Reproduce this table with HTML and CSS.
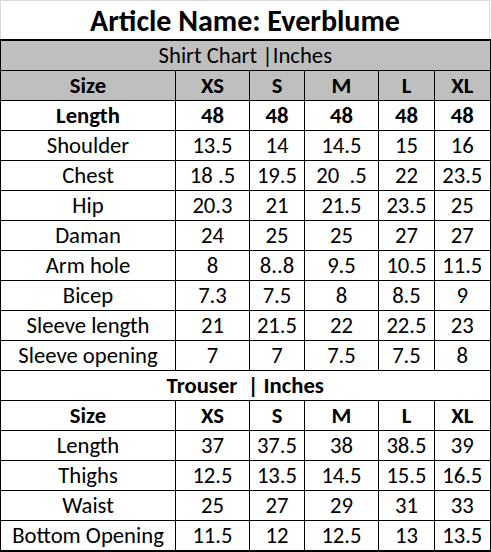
FILE: index.html
```html
<!DOCTYPE html>
<html>
<head>
<meta charset="utf-8">
<link rel="stylesheet" href="styles.css">
</head>
<body>
<div class="sheet">
  <div class="title">Article Name: Everblume</div>
  <table class="chart">
    <colgroup>
      <col class="c-label"><col class="c-xs"><col class="c-s"><col class="c-m"><col class="c-l"><col class="c-xl">
    </colgroup>
    <tbody>
      <tr class="section gray"><td colspan="6">Shirt Chart |Inches</td></tr>
      <tr class="head gray"><td>Size</td><td>XS</td><td>S</td><td>M</td><td>L</td><td>XL</td></tr>
      <tr class="bold"><td>Length</td><td>48</td><td>48</td><td>48</td><td>48</td><td>48</td></tr>
      <tr><td>Shoulder</td><td>13.5</td><td>14</td><td>14.5</td><td>15</td><td>16</td></tr>
      <tr><td>Chest</td><td>18 .5</td><td>19.5</td><td>20 &nbsp;.5</td><td>22</td><td>23.5</td></tr>
      <tr><td>Hip</td><td>20.3</td><td>21</td><td>21.5</td><td>23.5</td><td>25</td></tr>
      <tr><td>Daman</td><td>24</td><td>25</td><td>25</td><td>27</td><td>27</td></tr>
      <tr><td>Arm hole</td><td>8</td><td>8..8</td><td>9.5</td><td>10.5</td><td>11.5</td></tr>
      <tr><td>Bicep</td><td>7.3</td><td>7.5</td><td>8</td><td>8.5</td><td>9</td></tr>
      <tr><td>Sleeve length</td><td>21</td><td>21.5</td><td>22</td><td>22.5</td><td>23</td></tr>
      <tr><td>Sleeve opening</td><td>7</td><td>7</td><td>7.5</td><td>7.5</td><td>8</td></tr>
      <tr class="section"><td colspan="6"><b>Trouser &nbsp;| Inches</b></td></tr>
      <tr class="head"><td>Size</td><td>XS</td><td>S</td><td>M</td><td>L</td><td>XL</td></tr>
      <tr><td>Length</td><td>37</td><td>37.5</td><td>38</td><td>38.5</td><td>39</td></tr>
      <tr><td>Thighs</td><td>12.5</td><td>13.5</td><td>14.5</td><td>15.5</td><td>16.5</td></tr>
      <tr><td>Waist</td><td>25</td><td>27</td><td>29</td><td>31</td><td>33</td></tr>
      <tr><td>Bottom Opening</td><td>11.5</td><td>12</td><td>12.5</td><td>13</td><td>13.5</td></tr>
    </tbody>
  </table>
</div>
</body>
</html>
```
FILE: styles.css
```css
html, body {
  margin: 0;
  padding: 0;
  background: #ffffff;
}
.sheet {
  width: 491px;
  font-family: Carlito, Lato, "Liberation Sans", sans-serif;
  color: #000;
}
.title {
  box-sizing: border-box;
  width: 490px;
  height: 39px;
  border: 1px solid #d9d9d9;
  border-bottom: none;
  text-align: center;
  font-weight: bold;
  font-size: 30px;
  line-height: 40px;
}
.chart {
  width: 490px;
  border-collapse: collapse;
  table-layout: fixed;
  border-top: 2px solid #000;
  border-right: 2px solid #000;
  border-bottom: 2px solid #000;
  border-left: 1px solid #000;
  font-size: 22.7px;
}
.c-label { width: 175px; }
.c-xs { width: 74px; }
.c-s { width: 55px; }
.c-m { width: 74px; }
.c-l { width: 56px; }
.c-xl { width: 56px; }
.chart td {
  border: 1px solid #000;
  height: 29px;
  padding: 0;
  text-align: center;
  vertical-align: middle;
  line-height: 29px;
  white-space: nowrap;
}
.gray td {
  background: #bfbfbf;
}
.head td, .bold td {
  font-weight: bold;
}
```
